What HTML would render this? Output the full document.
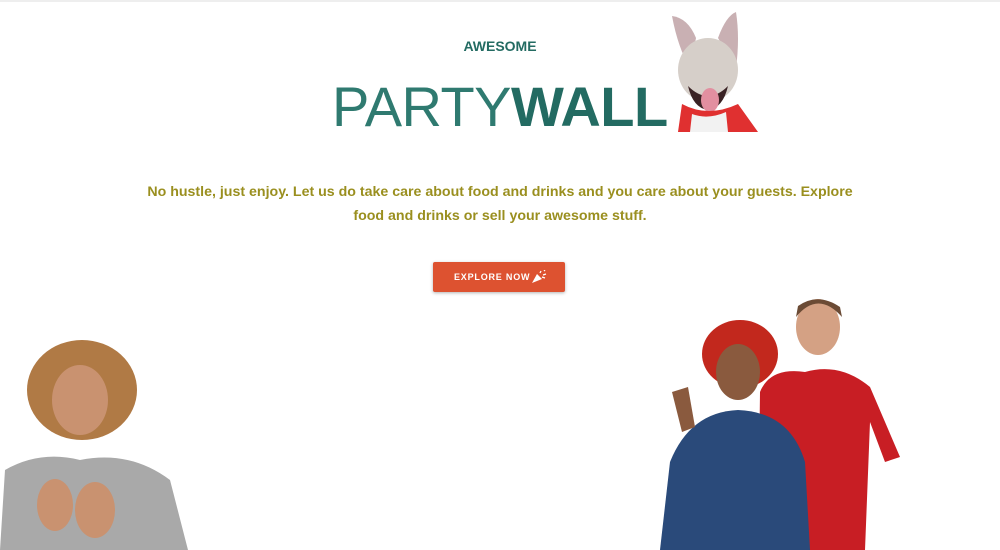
<!DOCTYPE html>
<html><head><meta charset="utf-8"><style>
html,body{margin:0;padding:0;width:1000px;height:550px;overflow:hidden;background:#fff;font-family:"Liberation Sans",sans-serif;position:relative}
.top{position:absolute;left:0;top:0;width:1000px;height:2px;background:#eee}
.aw{position:absolute;left:0;width:1000px;top:38px;text-align:center;font-weight:bold;font-size:14px;color:#236b62}
.pw{position:absolute;left:332px;top:79px;font-size:56px;line-height:56px;color:#236b62;letter-spacing:-0.5px;white-space:nowrap}
.pw span{color:#2f7a70;font-weight:normal}
.pw b{font-weight:bold}
.p{position:absolute;left:142px;width:716px;top:180px;text-align:center;color:#9a8f1f;font-weight:bold;font-size:14.2px;line-height:24px}
.btn{position:absolute;left:433px;top:262px;width:132px;height:30px;background:#dd5230;border-radius:2px;box-shadow:0 1px 3px rgba(0,0,0,.3);color:#fff;font-size:9px;font-weight:bold;letter-spacing:.8px;line-height:30px;box-sizing:border-box;padding-left:21px}
.abs{position:absolute}
</style></head><body>
<div class="top"></div>
<div class="aw">AWESOME</div>
<div class="pw"><span>PARTY</span><b>WALL</b></div>
<svg class="abs" style="left:668px;top:8px" width="92" height="124">
<path d="M22 60 Q10 40 4 8 Q20 10 28 30Z" fill="#c9b0b3"/><path d="M50 30 Q58 8 68 4 Q72 30 68 60Z" fill="#c9b0b3"/>
<ellipse cx="40" cy="62" rx="30" ry="32" fill="#d6cfc9"/>
<path d="M20 78 Q40 98 60 78 Q55 100 40 102 Q25 100 20 78Z" fill="#3a2224"/>
<ellipse cx="42" cy="92" rx="9" ry="12" fill="#e28fa0"/>
<path d="M10 124 L14 96 Q40 110 70 96 L90 124Z" fill="#e03030"/><path d="M22 124 L24 106 Q40 112 58 104 L60 124Z" fill="#f2f2f2"/>
</svg>
<div class="p">No hustle, just enjoy. Let us do take care about food and drinks and you care about your guests. Explore food and drinks or sell your awesome stuff.</div>
<div class="btn">EXPLORE NOW<svg style="position:absolute;left:98px;top:8px" width="16" height="14"><path d="M1 13 L6 4 L11 9Z" fill="#fff"/><path d="M9 3 L10 1 M12 5 L15 4 M13 1 L14 0 M11 7 L14 8" stroke="#fff" stroke-width="1.3"/></svg></div>
<svg class="abs" style="left:0;top:340px" width="190" height="210">
<ellipse cx="82" cy="50" rx="55" ry="50" fill="#b07a45"/>
<ellipse cx="80" cy="60" rx="28" ry="35" fill="#c99270"/>
<path d="M0 210 L5 130 Q40 110 80 120 Q130 110 170 140 L188 210Z" fill="#a9a9a9"/>
<ellipse cx="95" cy="170" rx="20" ry="28" fill="#c99270"/><ellipse cx="55" cy="165" rx="18" ry="26" fill="#c99270"/>
</svg>
<svg class="abs" style="left:660px;top:292px" width="245" height="258">
<path d="M98 258 L100 100 Q110 75 145 80 Q180 70 210 95 L240 165 L225 170 L210 130 L205 258Z" fill="#c81e24"/>
<ellipse cx="158" cy="35" rx="22" ry="28" fill="#d4a184"/><path d="M136 25 Q158 -2 182 25 L180 15 Q158 0 138 14Z" fill="#6b4b35"/>
<ellipse cx="80" cy="62" rx="38" ry="34" fill="#c2281d"/><ellipse cx="78" cy="80" rx="22" ry="28" fill="#8a5a3e"/>
<path d="M0 258 L10 170 Q30 120 78 118 Q130 120 145 170 L150 258Z" fill="#2a4a7a"/>
<path d="M12 100 L22 140 L35 135 L28 95Z" fill="#8a5a3e"/>
</svg>
</body></html>
